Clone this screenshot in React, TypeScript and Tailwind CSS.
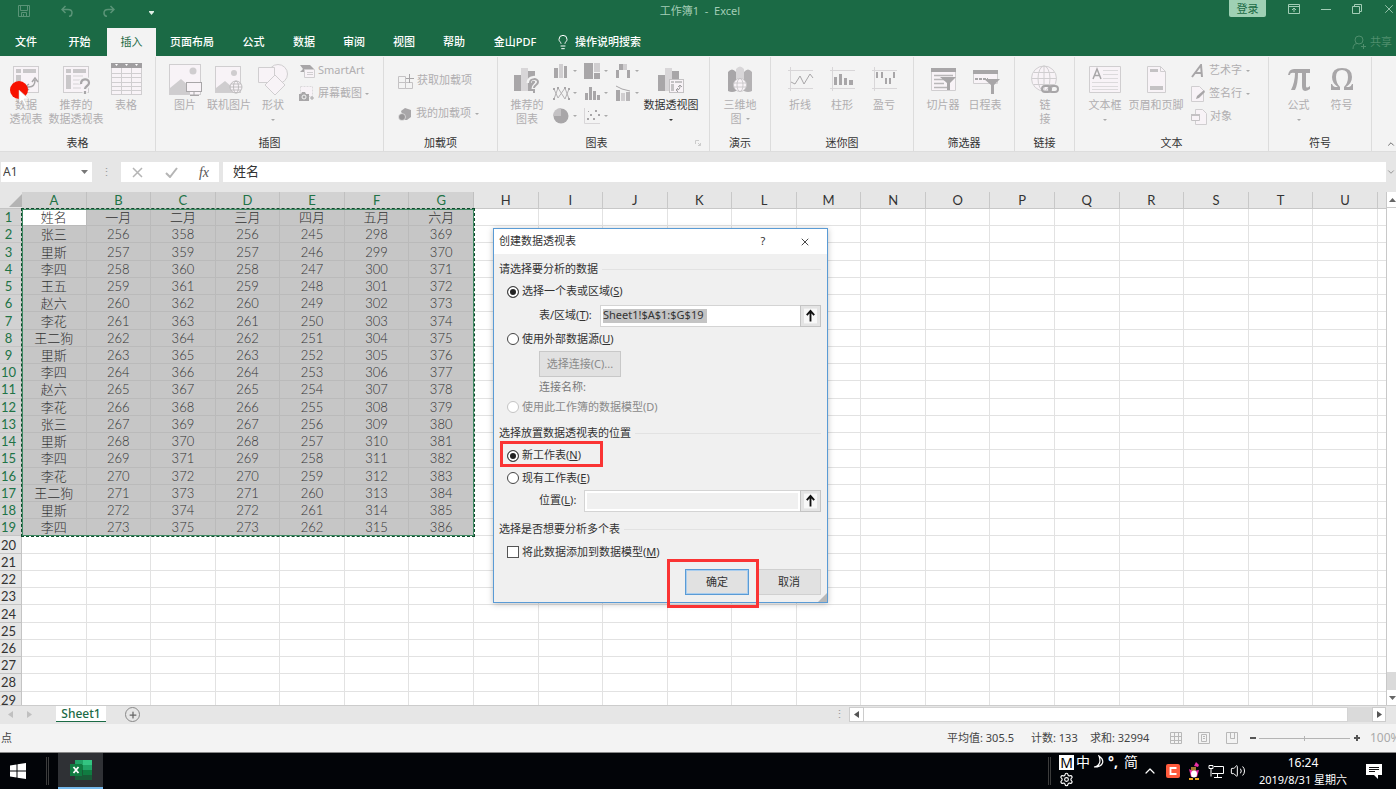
import type { ReactNode } from "react";
import {
  ChevronDown,
  ChevronUp,
  Lightbulb,
  Plus,
  Settings,
  Volume2,
  X,
} from "lucide-react";

const tabs = [
  { label: "文件", width: "w-[52px]" },
  { label: "开始", width: "w-[55px]" },
  { label: "插入", width: "w-[49px]", active: true },
  { label: "页面布局", width: "w-[72px]" },
  { label: "公式", width: "w-[51px]" },
  { label: "数据", width: "w-[50px]" },
  { label: "审阅", width: "w-[50px]" },
  { label: "视图", width: "w-[50px]" },
  { label: "帮助", width: "w-[50px]" },
  { label: "金山PDF", width: "w-[72px]" },
];

const columns = "ABCDEFGHIJKLMNOPQRSTU".split("");
const header = ["姓名", "一月", "二月", "三月", "四月", "五月", "六月"];
const names = [
  "张三", "里斯", "李四", "王五", "赵六", "李花", "王二狗", "里斯", "李四",
  "赵六", "李花", "张三", "里斯", "李四", "李花", "王二狗", "里斯", "李四",
];
// first value of each month, every following row adds one
const starts = [256, 358, 256, 245, 298, 369];

function cellValue(row: number, col: number) {
  if (col > 6 || row > 18) return "";
  if (row === 0) return header[col];
  if (col === 0) return names[row - 1];
  return starts[col - 1] + row - 1;
}

/* ---------- ribbon icons ---------- */

function Svg({ w = 32, h = 30, children }: { w?: number; h?: number; children: ReactNode }) {
  return (
    <svg width={w} height={h} viewBox={`0 0 ${w} ${h}`} fill="none" className="shrink-0">
      {children}
    </svg>
  );
}

const PivotIcon = () => (
  <Svg>
    <rect x="3.5" y="2.5" width="25" height="26" fill="#f8f3f7" stroke="#d0ced0" />
    <path d="M6 5h5v4H6zM13 5h13v4H13zM6 11h5v14H6z" fill="#c9c7c9" />
    <path d="M16 23h3c4 0 6-2 6-7M22 18l3-4 3 4M19 20l-4 3 4 3" stroke="#a8a6a8" strokeWidth="1.5" />
  </Svg>
);

const PivotHelpIcon = () => (
  <Svg>
    <rect x="3.5" y="2.5" width="25" height="26" fill="#f8f3f7" stroke="#d0ced0" />
    <path d="M6 5h5v4H6zM13 5h13v4H13zM6 11h5v14H6z" fill="#c9c7c9" />
    <path d="M13 12h10M13 16h8M13 20h8M13 24h8" stroke="#d5d3d5" />
    <path d="M21 20c0-6 8-6 8-1 0 3-4 3-4 7M25 28v2" stroke="#f3f3f3" strokeWidth="5" />
    <path d="M21 20c0-6 8-6 8-1 0 3-4 3-4 6M25 27v3" stroke="#a8a6a8" strokeWidth="2.2" />
  </Svg>
);

const TableIcon = () => (
  <Svg w={32} h={34}>
    <rect x="1.5" y="1.5" width="30" height="31" fill="#f8f3f7" stroke="#d0ced0" />
    <path d="M1 1h31v5H1z" fill="#a09ea0" />
    <path d="M5 2h3l-1.500 2zM15 2h3l-1.500 2zM25 2h3l-1.500 2z" fill="#fff" />
    <path d="M1 11.500h31M1 15.500h31M1 20.500h31M1 24.500h31M1 28.500h31M11.500 6v27M21.500 6v27" stroke="#d0ced0" />
  </Svg>
);

const PictureIcon = () => (
  <Svg w={36} h={34}>
    <rect x="2.500" y="2.500" width="31" height="30" fill="#f8f3f7" stroke="#d0ced0" />
    <circle cx="26" cy="9" r="3.500" fill="#cfcdcf" />
    <path d="M3 32V26l11-9 9 8v7z" fill="#cfcdcf" />
    <rect x="19.500" y="20.500" width="15" height="9" fill="#f8f3f7" stroke="#a8a6a8" />
    <path d="M23 33.500h9M27 30v3" stroke="#a8a6a8" />
  </Svg>
);

const OnlinePictureIcon = () => (
  <Svg>
    <rect x="2.500" y="2.500" width="25" height="26" fill="#f8f3f7" stroke="#d0ced0" />
    <circle cx="21" cy="9" r="3" fill="#cfcdcf" />
    <path d="M3 28v-4l9-7 7 6v5z" fill="#cfcdcf" />
    <g stroke="#b4b2b4" strokeWidth=".8">
      <circle cx="23" cy="23" r="6" fill="#f8f3f7" />
      <ellipse cx="23" cy="23" rx="2.500" ry="6" />
      <path d="M17 23h12M18 20h10M18 26h10" />
    </g>
  </Svg>
);

const ShapesIcon = () => (
  <Svg w={34} h={32}>
    <g fill="#f8f3f7" stroke="#d0ced0">
      <circle cx="22" cy="11" r="9.500" />
      <path d="M2.500 4.500h16v15h-16z" />
      <path d="M19 12l10 10-10 10L9 22z" />
    </g>
  </Svg>
);

function ChartIcon({ badge }: { badge?: "help" | "pivot" }) {
  return (
    <Svg w={32} h={30}>
      <path d="M3 11h7v16H3zM17 7h7v20h-7z" fill="#a8a6a8" />
      <path d="M10 4h7v23h-7z" fill="#d8d6d8" />
      {badge === "help" && (
        <>
          <path d="M18 19c0-6 9-6 9-1 0 3-4 3-4 7M23 27v2" stroke="#f3f3f3" strokeWidth="5" />
          <path d="M19 19c0-5 8-5 8-1 0 3-4 3-4 6M23 26v3" stroke="#a8a6a8" strokeWidth="2" />
        </>
      )}
      {badge === "pivot" && (
        <>
          <rect x="14.500" y="15.500" width="14" height="13" fill="#f8f3f7" stroke="#c4c2c4" />
          <path d="M16 17h3v2h-3zM20 17h7v2h-7zM16 20h3v7h-3z" fill="#c4c2c4" />
          <path d="M21 26c3 0 4-1 4-4M23 23l2-2 2 2M23 24l-2 2 2 2" stroke="#a09ea0" />
        </>
      )}
    </Svg>
  );
}

const MapIcon = () => (
  <Svg w={30} h={30}>
    <path d="M3 8q4-5 8 0v19q-4 2-8 0z" fill="#a8a6a8" />
    <path d="M19 8q4-5 8 0v19q-4 2-8 0z" fill="#b4b2b4" />
    <path d="M11 5q4-5 8 0v22h-8z" fill="#d8d6d8" />
    <g stroke="#c4c2c4" strokeWidth=".8">
      <circle cx="15" cy="21" r="6.500" fill="#f8f3f7" />
      <ellipse cx="15" cy="21" rx="3" ry="6.500" />
      <path d="M9 19h12M9 23h12" />
    </g>
  </Svg>
);

function SparkIcon({ kind }: { kind: "line" | "bar" | "winloss" }) {
  return (
    <Svg w={30} h={30}>
      <path d="M3 6.500h25M3 24.500h25M5.500 3v24" stroke="#d8d6d8" />
      {kind === "line" && <path d="M6 18l4 2 5-8 4 8 6-10 3 4" stroke="#a8a6a8" />}
      {kind === "bar" && <path d="M7 13h3v8H7zM12 10h3v11h-3zM17 14h3v7h-3zM22 16h4v5h-4z" fill="#a8a6a8" />}
      {kind === "winloss" && <path d="M7 8h2v6H7zM12 8h2v6h-2zM16 14h2v6h-2zM20 14h2v6h-2zM24 8h2v6h-2z" fill="#a8a6a8" />}
    </Svg>
  );
}

const SlicerIcon = () => (
  <Svg w={30} h={30}>
    <path d="M3.500 4.500h24v22h-24z" fill="#f8f3f7" stroke="#d0ced0" />
    <path d="M3 4h25v4H3z" fill="#a8a6a8" />
    <path d="M6 11.500h19M6 15.500h13M6 19.500h10M6 23.500h15" stroke="#b8b6b8" strokeWidth="1.500" />
    <path d="M12 13h16l-6 6v7h-3v-7z" fill="#a8a6a8" />
  </Svg>
);

const TimelineIcon = () => (
  <Svg w={30} h={30}>
    <path d="M3.500 6.500h24v13h-24z" fill="#f8f3f7" stroke="#d0ced0" />
    <path d="M3 6h25v4H3z" fill="#a8a6a8" />
    <path d="M5 15h13" stroke="#a8a6a8" strokeWidth="2" strokeDasharray="3 1" />
    <path d="M14 15h16l-6 6v9h-3v-9z" fill="#a8a6a8" />
  </Svg>
);

const LinkIcon = () => (
  <Svg w={30} h={30}>
    <g stroke="#d0ced0">
      <circle cx="14" cy="14.500" r="12.500" fill="#f8f3f7" />
      <ellipse cx="14" cy="14.500" rx="6" ry="12.500" />
      <path d="M1.500 14.500h25M3.500 8.500h21M3.500 20.500h21M14 2v25" />
    </g>
    <g stroke="#a8a6a8" strokeWidth="2">
      <rect x="12" y="22" width="9" height="6" rx="3" />
      <rect x="19" y="22" width="9" height="6" rx="3" />
    </g>
  </Svg>
);

const TextBoxIcon = () => (
  <Svg w={32} h={30}>
    <path d="M.5 2.500h31v26H.5z" fill="#f8f3f7" stroke="#d0ced0" />
    <path d="M4 15l4-10 4 10M5.500 11.500h5" stroke="#a8a6a8" strokeWidth="1.500" />
    <path d="M14 6.500h15M14 10.500h15M14 14.500h15M3 18.500h26M3 22.500h26M3 25.500h26" stroke="#dcdadc" />
  </Svg>
);

const HeaderIcon = () => (
  <Svg w={30} h={30}>
    <path d="M6.500 2.500h13l5 5v21h-18z" fill="#f8f3f7" stroke="#d0ced0" />
    <path d="M9 5h8v3H9zM9 22h13v4H9z" fill="#c4c2c4" />
    <path d="M19.500 2.500v5h5" stroke="#d0ced0" />
  </Svg>
);

const PiIcon = () => (
  <Svg w={30} h={30}>
    <path d="M4 11q1-6 6-6h16v4h-4v13q0 3 4 0v3q-8 5-8-3V9h-4q0 11-3 17H7q4-8 4-17Q6 8 6 11z" fill="#a8a6a8" />
  </Svg>
);

const OmegaIcon = () => (
  <Svg w={30} h={30}>
    <path
      d="M4 26v-6h1q1 3 3 3h3q-6-4-6-10Q5 4 15 4t10 9q0 6-6 10h3q2 0 3-3h1v6h-9v-3q4-4 4-10 0-7-6-7t-6 7q0 6 4 10v3z"
      fill="#a8a6a8"
    />
  </Svg>
);

function MiniChart({ kind }: { kind: string }) {
  return (
    <Svg w={17} h={16}>
      {kind === "column" && (
        <>
          <path d="M1 5h4v10H1zM11 3h3v12h-3z" fill="#a8a6a8" />
          <path d="M6 1h4v14H6z" fill="#d0ced0" />
        </>
      )}
      {kind === "tree" && (
        <>
          <path d="M0 0h9v16H0zM10 10h6v6h-6z" fill="#a8a6a8" />
          <path d="M10 0h6v9h-6z" fill="#d0ced0" />
        </>
      )}
      {kind === "waterfall" && (
        <>
          <path d="M1 7h3v8H1zM12 7h3v8h-3z" fill="#a8a6a8" />
          <path d="M4 1h4v6H4z" fill="#a8a6a8" />
          <path d="M8 1h4v6H8z" fill="#d0ced0" />
        </>
      )}
      {kind === "line" && (
        <>
          <path d="M1 14L5 3l7 11 4-10M1 4l4 9 7-10 4 11" stroke="#b4b2b4" />
          <path d="M0 13h2v2H0zM4 2h2v2H4zM0 3h2v2H0zM11 2h2v2h-2zM15 3h2v2h-2zM15 13h2v2h-2z" fill="#a8a6a8" />
        </>
      )}
      {kind === "histogram" && <path d="M1 8h3v7H1zM5 2h3v13H5zM9 6h3v9H9zM13 10h3v5h-3z" fill="#a8a6a8" />}
      {kind === "combo" && (
        <>
          <path d="M1 5h4v11H1z" fill="#a8a6a8" />
          <path d="M6 8h4v8H6z" fill="#d0ced0" />
          <path d="M11 7h4v9h-4z" fill="#b8b6b8" />
          <path d="M1 1l6 3 8 2" stroke="#a8a6a8" />
        </>
      )}
      {kind === "pie" && (
        <>
          <circle cx="8" cy="8" r="7.500" fill="#a8a6a8" />
          <path d="M8 8V0a8 8 0 0 0-8 8z" fill="#c4c2c4" />
        </>
      )}
      {kind === "scatter" && (
        <>
          <path d="M.5 0v15.500H16" stroke="#d8d6d8" />
          <path d="M3 10h2v2H3zM6 6h2v2H6zM9 10h2v2H9zM11 2h2v2h-2zM14 6h2v2h-2zM4 3h1v1H4z" fill="#a8a6a8" />
        </>
      )}
    </Svg>
  );
}

const Caret = ({ dark }: { dark?: boolean }) => (
  <svg width="4" height="2" viewBox="0 0 4 2" className="shrink-0">
    <path d="M0 0h4L2 2z" fill={dark ? "#333" : "#aaa"} />
  </svg>
);

/* ---------- ribbon layout ---------- */

interface GroupProps {
  label: string;
  className: string;
  inset?: string;
  launcher?: boolean;
  children: ReactNode;
}

function Group({ label, className, inset = "", launcher, children }: GroupProps) {
  return (
    <section aria-label={label} className={`flex shrink-0 flex-col border-r border-[#dcdcdc] ${className}`}>
      <div className={`flex flex-1 ${inset}`}>{children}</div>
      <div className="flex items-center pb-px">
        <p className="flex-1 text-center leading-[14px] text-[#333]">{label}</p>
        {launcher && (
          <button aria-label="更多选项" className="w-3.5">
            <svg width="6" height="6" viewBox="0 0 6 6">
              <path d="M.5 4V.5H4M3 3l2.500 2.500M5.500 3v2.500H3" fill="none" stroke="#ccc" />
            </svg>
          </button>
        )}
      </div>
    </section>
  );
}

interface BigButtonProps {
  icon: ReactNode;
  lines: string[];
  className: string;
  caret?: "below" | "inline";
  dark?: boolean;
}

function BigButton({ icon, lines, className, caret, dark }: BigButtonProps) {
  return (
    <button className={`flex shrink-0 flex-col items-center leading-[14px] whitespace-nowrap ${className} ${dark ? "text-[#333]" : "text-[#b0aeb0]"}`}>
      <span className="flex h-[41px] items-center pt-0.5">{icon}</span>
      {lines.map((line, i) => (
        <span key={line} className="flex items-center gap-1">
          {line}
          {caret === "inline" && i === lines.length - 1 && <Caret />}
        </span>
      ))}
      {caret === "below" && (
        <span className="flex h-4 items-center">
          <Caret dark={dark} />
        </span>
      )}
    </button>
  );
}

interface SmallButtonProps {
  icon: ReactNode;
  label: string;
  caret?: boolean;
  className?: string;
}

function SmallButton({ icon, label, caret, className = "gap-1" }: SmallButtonProps) {
  return (
    <button className={`flex h-[23px] items-center whitespace-nowrap text-[#b0aeb0] ${className}`}>
      {icon}
      {label}
      {caret && <Caret />}
    </button>
  );
}

function Ribbon() {
  return (
    <div className="flex h-24 shrink-0 overflow-hidden border-b border-[#ddd] bg-[#f3f3f3] pt-px">
      <Group label="表格" className="w-[156px]" inset="pl-px">
        <BigButton icon={<PivotIcon />} lines={["数据", "透视表"]} className="w-[50px]" />
        <BigButton icon={<PivotHelpIcon />} lines={["推荐的", "数据透视表"]} className="w-[50px]" />
        <BigButton icon={<TableIcon />} lines={["表格"]} className="w-[50px]" />
      </Group>
      <Group label="插图" className="w-[228px]" inset="pl-[7px]">
        <BigButton icon={<PictureIcon />} lines={["图片"]} className="w-11" />
        <BigButton icon={<OnlinePictureIcon />} lines={["联机图片"]} className="w-11" />
        <BigButton icon={<ShapesIcon />} lines={["形状"]} className="w-11" caret="below" />
        <div className="flex flex-col pt-0.5 pl-1">
          <SmallButton
            label="SmartArt"
            className="gap-[3px]"
            icon={
              <Svg w={16} h={14}>
                <path d="M1 1h10l4 4-4 3H1l3-3z" fill="#a8a6a8" />
                <path d="M5.500 5.500h10v8h-10z" fill="#f8f3f7" stroke="#d0ced0" />
                <path d="M8 8.500h6M8 10.500h6" stroke="#d0ced0" />
              </Svg>
            }
          />
          <SmallButton
            label="屏幕截图"
            caret
            className="gap-[3px]"
            icon={
              <Svg w={16} h={16}>
                <path d="M1.500.500h12v10h-12z" fill="#f8f3f7" stroke="#dcdadc" strokeDasharray="2 1" />
                <path d="M0 8h2l1-2h3l1 2h3v7H0z" fill="#a8a6a8" />
                <circle cx="5" cy="11" r="2" stroke="#f3f3f3" />
                <path d="M11 12h4M13 10v4" stroke="#a8a6a8" />
              </Svg>
            }
          />
        </div>
      </Group>
      <Group label="加载项" className="w-[114px]" inset="pl-3.5">
        <div className="flex flex-col gap-2.5 pt-3">
          <SmallButton
            label="获取加载项"
            className="gap-[3px]"
            icon={
              <Svg w={16} h={16}>
                <path d="M.5 3.500h7v6h-7zM.5 9.500h7v6h-7zM7.500 9.500h7v6h-7z" stroke="#c4c2c4" />
                <path d="M8 5.500h8M11.500 1v9" stroke="#a8a6a8" />
              </Svg>
            }
          />
          <SmallButton
            label="我的加载项"
            caret
            icon={
              <Svg w={14} h={14}>
                <path d="M3 4l4-3 6 2v7l-4 3H6z" fill="#a8a6a8" />
                <circle cx="4" cy="10" r="3.500" fill="#989698" stroke="#f3f3f3" strokeWidth=".6" />
              </Svg>
            }
          />
        </div>
      </Group>
      <Group label="图表" className="w-[212px]" inset="pl-1" launcher>
        <BigButton icon={<ChartIcon badge="help" />} lines={["推荐的", "图表"]} className="w-[50px]" />
        <div className="grid grid-cols-[31px_31px_31px] grid-rows-[23px_22px_23px] items-center pt-0.5 pl-px">
          {["column", "tree", "waterfall", "line", "histogram", "combo", "pie", "scatter"].map((kind) => (
            <button key={kind} aria-label={kind} className="flex items-center gap-[3px]">
              <MiniChart kind={kind} />
              <Caret />
            </button>
          ))}
        </div>
        <BigButton icon={<ChartIcon badge="pivot" />} lines={["数据透视图"]} className="w-[50px]" caret="below" dark />
      </Group>
      <Group label="演示" className="w-[61px]">
        <BigButton icon={<MapIcon />} lines={["三维地", "图"]} className="w-[60px]" caret="inline" />
      </Group>
      <Group label="迷你图" className="w-[143px]" inset="pl-2">
        <BigButton icon={<SparkIcon kind="line" />} lines={["折线"]} className="w-[42px]" />
        <BigButton icon={<SparkIcon kind="bar" />} lines={["柱形"]} className="w-[42px]" />
        <BigButton icon={<SparkIcon kind="winloss" />} lines={["盈亏"]} className="w-[42px]" />
      </Group>
      <Group label="筛选器" className="w-[101px]" inset="pl-2">
        <BigButton icon={<SlicerIcon />} lines={["切片器"]} className="w-[42px]" />
        <BigButton icon={<TimelineIcon />} lines={["日程表"]} className="w-[42px]" />
      </Group>
      <Group label="链接" className="w-[60px]">
        <BigButton icon={<LinkIcon />} lines={["链", "接"]} className="w-[60px]" />
      </Group>
      <Group label="文本" className="w-[194px]" inset="pl-2">
        <BigButton icon={<TextBoxIcon />} lines={["文本框"]} className="w-11" caret="below" />
        <BigButton icon={<HeaderIcon />} lines={["页眉和页脚"]} className="w-[58px]" />
        <div className="flex flex-col pt-0.5 pl-1.5">
          <SmallButton
            label="艺术字"
            caret
            icon={
              <Svg w={14} h={14}>
                <path d="M1 13L10 1l1 12M4 9h7" stroke="#a8a6a8" strokeWidth="2" />
              </Svg>
            }
          />
          <SmallButton
            label="签名行"
            caret
            icon={
              <Svg w={14} h={16}>
                <path d="M.5.500h8l4 4v11H.5z" fill="#f8f3f7" stroke="#d0ced0" />
                <path d="M5 13l1-3 7-6 1 2-6 6z" fill="#a8a6a8" />
              </Svg>
            }
          />
          <SmallButton
            label="对象"
            className="gap-[3px]"
            icon={
              <Svg w={16} h={16}>
                <path d="M4.500.500h7l4 4v11h-11z" fill="#f8f3f7" stroke="#d0ced0" />
                <path d="M.5 5.500h8v6h-8z" fill="#f8f3f7" stroke="#c4c2c4" />
                <path d="M0 5h9v2H0z" fill="#c4c2c4" />
              </Svg>
            }
          />
        </div>
      </Group>
      <Group label="符号" className="w-[103px]" inset="pl-2">
        <BigButton icon={<PiIcon />} lines={["公式"]} className="w-[43px]" caret="below" />
        <BigButton icon={<OmegaIcon />} lines={["符号"]} className="w-[43px]" />
      </Group>
      <div className="flex flex-1 items-end justify-end pb-0.5">
        <button aria-label="折叠功能区">
          <ChevronUp className="h-2.5 w-2.5 text-[#555]" />
        </button>
      </div>
    </div>
  );
}

function TitleBar() {
  return (
    <header className="shrink-0 bg-[#1b6a45] text-white">
      <div className="grid h-7 grid-cols-[1fr_auto_1fr] items-start text-[#a3cdb6]">
        <div className="flex h-[22px] items-center text-[#5a9477]">
          <svg width="12" height="12" viewBox="0 0 12 12" fill="none" stroke="currentColor" className="ml-[18px]">
            <path d="M.5.500h11v11H.5zM2.500.500v5h7v-5M3.500 11.500v-4h5v4M5.500 9v2" />
          </svg>
          <svg width="12" height="12" viewBox="0 0 12 12" fill="none" stroke="currentColor" strokeWidth="1.500" className="ml-[31px]">
            <path d="M4.500 1L1 4.500 4.500 8M1 4.500h6q4 0 4 3.500 0 3-3 3.500" />
          </svg>
          <svg width="12" height="12" viewBox="0 0 12 12" fill="none" stroke="currentColor" strokeWidth="1.500" className="ml-[30px]">
            <path d="M7.500 1L11 4.500 7.500 8M11 4.500H5Q1 4.500 1 8q0 3 3 3.500" />
          </svg>
          <svg width="5" height="4" viewBox="0 0 5 4" className="mt-1 ml-[34px]">
            <path d="M0 0h5v1L2.500 4 0 1z" fill="#e0efe6" />
          </svg>
        </div>
        <p className="h-[22px] pl-1 leading-[22px] whitespace-pre">工作簿1  -  Excel</p>
        <div className="flex h-[17px] items-center justify-end">
          <button className="h-[17px] w-[37px] rounded-b-xs bg-[#9fd0b4] leading-4 text-[#1b6a45]">登录</button>
          <svg width="12" height="10" viewBox="0 0 12 10" fill="none" stroke="currentColor" className="ml-[22px]">
            <path d="M.5.500h11v9H.5zM.5 2.500h11M6 8V4M4 6l2-2 2 2" />
          </svg>
          <svg width="10" height="10" viewBox="0 0 10 10" stroke="currentColor" className="ml-[21px]">
            <path d="M0 5.500h10" />
          </svg>
          <svg width="10" height="10" viewBox="0 0 10 10" fill="none" stroke="currentColor" className="ml-[21px]">
            <path d="M.5 2.500h7v7h-7zM2.500 2.500v-2h7v7h-2" />
          </svg>
          <X className="ml-5 h-3.5 w-3.5" strokeWidth={1.5} />
        </div>
      </div>
      <div className="flex h-7 items-center font-medium">
        <nav className="flex h-7">
          {tabs.map((tab) => (
            <button
              key={tab.label}
              className={`h-7 whitespace-nowrap ${tab.width} ${tab.active ? "bg-[#f3f3f3] font-normal text-[#1b6a45]" : ""}`}
            >
              {tab.label}
            </button>
          ))}
        </nav>
        <button className="ml-1 flex items-center gap-1">
          <Lightbulb className="h-4 w-4" strokeWidth={1.5} />
          操作说明搜索
        </button>
        <button className="mr-1 ml-auto flex items-center gap-1 font-normal text-[#4f8e6d]">
          <svg width="14" height="15" viewBox="0 0 14 15" fill="none" stroke="currentColor">
            <circle cx="7" cy="5" r="4" />
            <path d="M1 14q0-5 4-5.500M9 11.500h5M11.500 9v5" />
          </svg>
          共享
        </button>
      </div>
    </header>
  );
}

function FormulaBar() {
  return (
    <div className="flex h-10 shrink-0 items-center bg-[#e6e6e6] py-2.5 text-[#444]">
      <div className="ml-px flex h-5 w-[91px] items-center bg-white pr-1">
        <input aria-label="名称框" defaultValue="A1" className="w-full min-w-0 pl-0.5 text-[12px] outline-none" />
        <svg width="7" height="4" viewBox="0 0 7 4" className="shrink-0">
          <path d="M0 0h7L3.500 4z" fill="#777" />
        </svg>
      </div>
      <span className="w-[29px] text-center text-[#999]">⋮</span>
      <div className="flex h-5 w-[98px] items-center justify-between bg-white px-2.5">
        <svg width="13" height="11" viewBox="0 0 13 11">
          <path d="M2 1l9 9M11 1l-9 9" fill="none" stroke="#b5b5b5" strokeWidth="1.500" />
        </svg>
        <svg width="13" height="11" viewBox="0 0 13 11">
          <path d="M1 6l4 4 7-9" fill="none" stroke="#b5b5b5" strokeWidth="2" />
        </svg>
        <span className="font-['Liberation_Serif',serif] text-[14px] text-[#555] italic">fx</span>
      </div>
      <input
        aria-label="编辑栏"
        defaultValue="姓名"
        className="ml-1 h-5 min-w-0 flex-1 bg-white pb-[3px] pl-2.5 font-['Noto_Sans_CJK_SC',sans-serif] text-[13px] text-[#333] outline-none"
      />
      <ChevronDown className="h-2.5 w-2.5 text-[#888]" />
    </div>
  );
}

function Grid() {
  return (
    <div className="flex min-h-0 flex-1 overflow-hidden bg-white">
      <div className="relative min-w-0 flex-1">
        <table className="h-[517px] w-full table-fixed border-separate border-spacing-0 text-center font-['Lato','Noto_Sans_CJK_SC',sans-serif] text-[13px] leading-4 font-light text-[#333]">
          <colgroup>
            <col className="w-[22px]" />
            {columns.map((c) => (
              <col key={c} />
            ))}
            <col className="w-2" />
          </colgroup>
          <thead>
            <tr className="h-[17px]">
              <th className="border-b border-[#c4c4c4] bg-[#e6e6e6] p-0">
                <svg width="13" height="13" viewBox="0 0 13 13" className="ml-auto">
                  <path d="M13 0v13H0z" fill="#b4b4b4" />
                </svg>
              </th>
              {columns.map((c, i) => (
                <th
                  key={c}
                  className={`border-r border-b p-0 font-normal ${
                    i < 7 ? "border-[#c0c0c0] bg-[#d2d2d2] text-[#217346]" : "border-[#c8c8c8] bg-[#e6e6e6]"
                  }`}
                >
                  {c}
                </th>
              ))}
              <th className="border-b border-[#c8c8c8] bg-[#e6e6e6] p-0" />
            </tr>
          </thead>
          <tbody>
            {Array.from({ length: 29 }, (_, row) => (
              <tr key={row}>
                <th
                  className={`border-r border-b border-[#c4c4c4] p-0 pr-1 text-center font-normal ${
                    row < 19 ? "bg-[#d2d2d2] text-[#217346]" : "bg-[#e6e6e6]"
                  }`}
                >
                  {row + 1}
                </th>
                {columns.map((c, col) => (
                  <td
                    key={c}
                    className={`border-r border-b p-0 ${
                      row === 0 && col === 0
                        ? "border-[#bababa] bg-white"
                        : row < 19 && col < 7
                          ? "border-[#bababa] bg-[#c6c6c6]"
                          : "border-[#e2e2e2]"
                    }`}
                  >
                    {cellValue(row, col)}
                  </td>
                ))}
                <td className="border-b border-[#e2e2e2] p-0" />
              </tr>
            ))}
          </tbody>
        </table>
        {/* copy marquee around A1:G19 */}
        <div className="pointer-events-none absolute top-4 left-[21px] h-[329px] w-[calc((100%-30px)/3+2px)] border border-dashed border-[#0d4a2b] shadow-[inset_0_0_0_1px_#3f8a63]" />
      </div>
      <div className="flex w-2.5 flex-col border-l border-[#c8c8c8] bg-[#dadada]">
        <button aria-label="向上滚动" className="flex h-4 items-center justify-end border-b border-[#ccc] bg-white">
          <svg width="7" height="4" viewBox="0 0 7 4">
            <path d="M0 4h7L3.500 0z" fill="#666" />
          </svg>
        </button>
        <div className="flex-1 bg-white" />
        <div className="h-[18px]" />
        <button aria-label="向下滚动" className="flex h-[15px] items-center justify-end bg-white">
          <svg width="7" height="4" viewBox="0 0 7 4">
            <path d="M0 0h7L3.500 4z" fill="#666" />
          </svg>
        </button>
      </div>
    </div>
  );
}

const Arrow = ({ left, color }: { left?: boolean; color: string }) => (
  <svg width="5" height="7" viewBox="0 0 5 7">
    <path d={left ? "M5 0v7L0 3.500z" : "M0 0v7l5-3.500z"} fill={color} />
  </svg>
);

function SheetBar() {
  return (
    <div className="flex h-[19px] shrink-0 items-start border-t border-[#ccc] bg-[#e6e6e6]">
      <div className="flex h-[17px] w-14 items-center gap-3.5 pl-2">
        <Arrow left color="#c0c0c0" />
        <Arrow color="#c0c0c0" />
      </div>
      <button className="h-4 w-[50px] border-b border-[#1b6a45] bg-white text-[12px] leading-[14px] font-medium text-[#1b6a45]">Sheet1</button>
      <button aria-label="新工作表" className="mt-px ml-[19px] flex h-[15px] w-[15px] items-center justify-center rounded-full border border-[#888]">
        <Plus className="h-2.5 w-2.5 text-[#666]" strokeWidth={3} />
      </button>
      <span className="ml-auto w-5 text-center leading-4 text-[#999]">⋮</span>
      <div className="mt-px mr-2.5 flex h-[15px] w-[537px] bg-[#dadada]">
        <button aria-label="向左滚动" className="flex w-[15px] items-center justify-center border border-[#ccc] bg-white">
          <Arrow left color="#555" />
        </button>
        <div className="flex-1 border border-l-0 border-[#d4d4d4] bg-white" />
        <div className="w-6" />
        <button aria-label="向右滚动" className="flex w-3.5 items-center justify-center border border-[#ccc] bg-white">
          <Arrow color="#555" />
        </button>
      </div>
    </div>
  );
}

function StatusBar() {
  return (
    <div className="flex h-[29px] shrink-0 items-center border-b border-[#888] bg-[#f3f3f3] text-[#444]">
      <span className="pl-px">点</span>
      <span className="ml-auto w-[84px] whitespace-nowrap">平均值: 305.5</span>
      <span className="w-[59px] whitespace-nowrap">计数: 133</span>
      <span className="w-20 whitespace-nowrap">求和: 32994</span>
      <div className="flex gap-4 text-[#b8b8b8]">
        <svg width="12" height="12" viewBox="0 0 12 12" fill="none" stroke="currentColor">
          <path d="M.5.500h11v11H.5zM4.500 0v12M8.500 0v12M0 4.500h12M0 8.500h12" />
        </svg>
        <svg width="12" height="12" viewBox="0 0 12 12" fill="none" stroke="currentColor">
          <path d="M.5.500h11v11H.5zM3.500 2.500h5v7h-5zM5 4.500h2M5 6.500h2" />
        </svg>
        <svg width="12" height="12" viewBox="0 0 12 12" fill="none" stroke="currentColor">
          <path d="M.5.500h11v11H.5zM4.500 0v6.500H9M8.500 0v6.500" />
        </svg>
      </div>
      <svg width="110" height="10" viewBox="0 0 110 10" className="ml-3">
        <path d="M0 5h6M104 5h6M107 2v6" stroke="#555" strokeWidth="2" />
        <path d="M9 5.500h91M54.500 3v5" stroke="#b4b4b4" />
      </svg>
      <span className="w-9 overflow-hidden pl-2.5 text-[12px] whitespace-nowrap text-[#aaa]">100%</span>
    </div>
  );
}

function Taskbar() {
  return (
    <footer className="flex h-9 shrink-0 bg-[#020408] text-white">
      <button aria-label="开始" className="flex w-[46px] items-center pl-2.5">
        <svg width="16" height="16" viewBox="0 0 16 16" fill="#fff">
          <path d="M0 2.500L6.500 1.500v6H0zM7.500 1.300L16 0v7.500H7.500zM0 8.500h6.500v6L0 13.500zM7.500 8.500H16V16l-8.500-1.300z" />
        </svg>
      </button>
      <div className="my-1 w-[3px] border-x border-[#3c3c3c]" />
      <button aria-label="Excel" className="ml-[9px] flex w-[45px] items-center justify-center border-b-2 border-[#76b9ed] bg-[#2f3135]">
        <svg width="22" height="22" viewBox="0 0 22 22">
          <path d="M5 1h17v5H5z" fill="#21a366" />
          <path d="M13 1h9v5h-9z" fill="#33c481" />
          <path d="M5 6h17v5H5z" fill="#107c41" />
          <path d="M13 6h9v5h-9z" fill="#21a366" />
          <path d="M5 11h17v10H5z" fill="#185c37" />
          <path d="M13 11h9v5h-9z" fill="#107c41" />
          <path d="M0 5h12v12H0z" fill="#107c41" />
          <path d="M3.500 8l5 6M8.500 8l-5 6" stroke="#fff" strokeWidth="1.800" />
        </svg>
      </button>
      <div className="my-1 mr-2 ml-auto w-[3px] border-x border-[#3c3c3c]" />
      <div className="w-[82px] pt-px">
        <div className="flex items-center gap-0.5 text-[14px] leading-4">
          <span className="h-[15px] w-[15px] bg-white text-center text-black">M</span>
          <span>中</span>
          <svg width="14" height="14" viewBox="0 0 14 14" fill="none" stroke="#fff" strokeWidth="1.200">
            <path d="M7 1c6 4 5 11-5 11 6-1 7-6 5-11z" />
          </svg>
          <span className="w-[14px] font-bold whitespace-nowrap">°,</span>
          <span>简</span>
        </div>
        <Settings className="mt-0.5 h-[15px] w-[15px]" strokeWidth={1.8} />
      </div>
      <div className="flex items-center">
        <ChevronUp className="ml-px h-4 w-4" strokeWidth={1.8} />
        <svg width="14" height="14" viewBox="0 0 14 14" className="ml-2">
          <rect width="14" height="14" rx="2" fill="#ff5a3c" />
          <path d="M10.500 4H4.500v6h6" fill="none" stroke="#fff" strokeWidth="1.800" />
        </svg>
        <svg width="12" height="18" viewBox="0 0 12 18" className="ml-2">
          <path d="M8 0l3 3-1 2-4-1z" fill="#ec2fa6" />
          <path d="M3 5h5v4H3z" fill="#a07830" />
          <path d="M1 7l4 2 6-1-2 7H3z" fill="#ec2fa6" />
          <ellipse cx="6" cy="12" rx="3" ry="3.500" fill="#fff" />
          <path d="M1 16h4v2H1zM7 16h4v2H7z" fill="#f2a820" />
        </svg>
        <svg width="16" height="14" viewBox="0 0 16 14" fill="none" stroke="#fff" className="ml-2">
          <path d="M6 2.500h9.500v7H4M1 1.500h4v3H1zM3 5v7.500M9.500 10v3M6 13.500h8" />
        </svg>
        <Volume2 className="ml-1.5 h-4 w-4" strokeWidth={1.5} />
      </div>
      <div className="ml-2.5 w-[94px] pt-px text-center text-[12px] leading-[17px] whitespace-nowrap">
        <p>16:24</p>
        <p className="text-[11px]">2019/8/31 星期六</p>
      </div>
      <button aria-label="通知" className="mr-3.5 ml-4 flex items-center">
        <svg width="16" height="16" viewBox="0 0 16 16">
          <path d="M0 1h16v11h-4v4l-4-4H0z" fill="#fff" />
          <path d="M3 4.500h10M3 6.500h10M3 8.500h6" stroke="#111" />
        </svg>
      </button>
    </footer>
  );
}

/* ---------- dialog ---------- */

function Section({ children }: { children: ReactNode }) {
  return (
    <h3 className="flex h-5 items-center gap-1 font-normal after:h-px after:flex-1 after:bg-[#e2e2e2]">{children}</h3>
  );
}

interface OptionProps {
  name: string;
  checked?: boolean;
  disabled?: boolean;
  className?: string;
  children: ReactNode;
}

function Option({ name, checked, disabled, className = "h-6", children }: OptionProps) {
  return (
    <label className={`flex items-center gap-[3px] pl-2 ${className} ${disabled ? "text-[#8a8a8a]" : ""}`}>
      <input
        type="radio"
        name={name}
        defaultChecked={checked}
        disabled={disabled}
        className="h-3 w-3 appearance-none rounded-full border border-[#444] bg-white checked:bg-[#222] checked:shadow-[inset_0_0_0_2px_#fff] disabled:border-[#c4c4c4]"
      />
      <span>{children}</span>
    </label>
  );
}

function PickButton() {
  return (
    <button type="button" aria-label="选择区域" className="flex h-[22px] w-[21px] items-center justify-center border border-[#c4c4c4] bg-[#e4e4e4]">
      <svg width="13" height="16" viewBox="0 0 14 16">
        <path d="M0 0h14v16H0z" fill="#f8f8f8" />
        <path d="M7 14V3M3 7l4-4.500L11 7" fill="none" stroke="#111" strokeWidth="2" />
      </svg>
    </button>
  );
}

function PivotDialog() {
  return (
    <form
      role="dialog"
      aria-label="创建数据透视表"
      className="absolute top-[228px] left-[493px] w-[335px] border border-[#5a9bd5] bg-[#f0f0f0] text-[#333] shadow-[0_1px_6px_rgba(0,0,0,0.25)]"
    >
      <div className="flex h-[25px] items-center bg-white pr-px pl-[5px]">
        <h2 className="flex-1 font-normal">创建数据透视表</h2>
        <button type="button" aria-label="帮助" className="w-[42px]">?</button>
        <button type="button" aria-label="关闭" className="flex w-[42px] justify-center">
          <X className="h-3 w-3" strokeWidth={1.8} />
        </button>
      </div>
      <div className="pt-[5px] pr-1.5 pb-[7px] pl-[5px]">
        <Section>请选择要分析的数据</Section>
        <Option name="source" checked className="h-[25px]">
          选择一个表或区域(<u>S</u>)
        </Option>
        <div className="flex h-[23px] items-center pl-10">
          <label htmlFor="range" className="w-[61px]">
            表/区域(<u>T</u>):
          </label>
          <div className="flex h-[22px] min-w-0 flex-1 items-center border border-r-0 border-[#d4d4d4] bg-white pl-0.5">
            <input
              id="range"
              defaultValue="Sheet1!$A$1:$G$19"
              className="h-3.5 w-[104px] bg-[#c4c4c4] text-[11px] outline-none"
            />
          </div>
          <PickButton />
        </div>
        <Option name="source">
          使用外部数据源(<u>U</u>)
        </Option>
        <button type="button" disabled className="ml-10 block h-[26px] w-[82px] border border-[#c8c8c8] bg-[#e1e1e1] text-[#8a8a8a]">
          选择连接(C)...
        </button>
        <p className="h-5 pl-10 leading-5 text-[#777]">连接名称:</p>
        <Option name="source" disabled className="h-5">
          使用此工作簿的数据模型(D)
        </Option>
        <div className="mt-1.5">
          <Section>选择放置数据透视表的位置</Section>
        </div>
        <Option name="target" checked className="h-[25px]">
          新工作表(<u>N</u>)
        </Option>
        <Option name="target" className="h-5">
          现有工作表(<u>E</u>)
        </Option>
        <div className="flex h-[25px] items-center pl-10">
          <label htmlFor="location" className="w-[45px]">
            位置(<u>L</u>):
          </label>
          <input
            id="location"
            className="h-[22px] min-w-0 flex-1 border border-r-0 border-[#d4d4d4] bg-[#f0f0f0] shadow-[inset_0_0_0_2px_#fff] outline-none"
          />
          <PickButton />
        </div>
        <div className="mt-1.5">
          <Section>选择是否想要分析多个表</Section>
        </div>
        <label className="flex h-[26px] items-center gap-[3px] pl-2">
          <input type="checkbox" className="h-3 w-3 appearance-none border border-[#555] bg-white" />
          <span>
            将此数据添加到数据模型(<u>M</u>)
          </span>
        </label>
        <div className="mt-1 flex justify-end gap-2">
          <button type="submit" className="h-[26px] w-16 border border-[#5a9bd5] bg-[#e1e1e1] shadow-[inset_0_0_0_1px_#a9cdee]">
            确定
          </button>
          <button type="button" className="h-[26px] w-16 border border-[#d0d0d0] bg-[#e1e1e1]">
            取消
          </button>
        </div>
      </div>
      <svg width="9" height="9" viewBox="0 0 9 9" className="absolute right-0 bottom-0">
        <path d="M9 0v9H0z" fill="#b8b8b8" />
      </svg>
      {/* red highlight frames */}
      <div className="pointer-events-none absolute top-[212px] left-1.5 h-[26px] w-[103px] border-3 border-[#fa3434]" />
      <div className="pointer-events-none absolute top-[330px] left-[173px] h-[49px] w-[92px] border-3 border-[#fa3434]" />
    </form>
  );
}

export default function App() {
  return (
    <div className="relative flex h-screen flex-col overflow-hidden bg-[#e6e6e6] font-['Noto_Sans','Noto_Sans_CJK_SC',sans-serif] text-[11px]">
      <TitleBar />
      <Ribbon />
      <FormulaBar />
      <Grid />
      <SheetBar />
      <StatusBar />
      <Taskbar />
      <PivotDialog />
      {/* click marker with pointer */}
      <svg width="30" height="30" viewBox="0 0 30 30" className="pointer-events-none absolute top-20 left-2.5">
        <circle cx="9" cy="10" r="9" fill="#f81200" />
        <path d="M9 10v13l3-3 3 6 2-1-3-6h5z" fill="#fff" stroke="#ccc" strokeWidth=".5" />
      </svg>
    </div>
  );
}
